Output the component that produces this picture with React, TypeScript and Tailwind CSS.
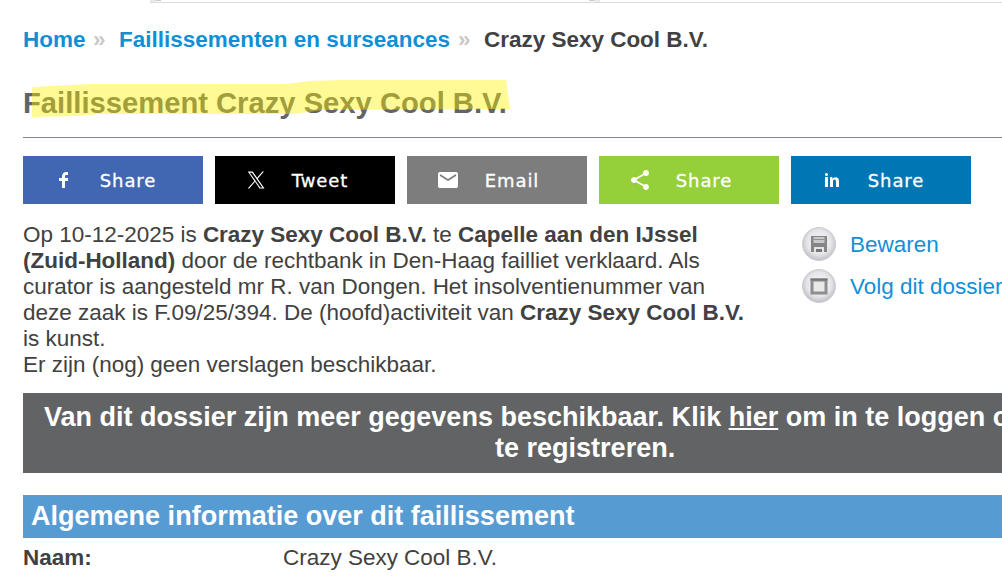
import type { ReactNode } from "react";

const shareButtons = [
  {
    name: "facebook",
    label: "Share",
    color: "bg-[#4267b2]",
    path: "m21.7 16.7h5v5h-5v11.6h-5v-11.6h-5v-5h5v-2.1c0-2 0.6-4.5 1.8-5.9 1.3-1.3 2.8-2 4.7-2h3.5v5h-3.5c-0.9 0-1.5 0.6-1.5 1.5v3.5z",
  },
  {
    name: "twitter",
    label: "Tweet",
    color: "bg-black",
    path: "M22.9 17.9L33.3 6h-2.500l-9 10.300L14.600 6H6.300l10.900 15.600L6.300 34h2.500l9.500-10.900L25.900 34h8.300L22.900 17.900zm-3.400 3.800l-1.100-1.600L9.600 7.800h3.800l7.100 10 1.100 1.600 9.200 13h-3.800l-7.500-10.700z",
  },
  {
    name: "email",
    label: "Email",
    color: "bg-[#7d7d7d]",
    path: "m33.4 13.4v-3.4l-13.4 8.4-13.4-8.4v3.4l13.4 8.2z m0-6.8q1.3 0 2.3 1.1t0.9 2.3v20q0 1.3-0.9 2.3t-2.3 1.1h-26.8q-1.3 0-2.3-1.1t-0.9-2.3v-20q0-1.3 0.9-2.3t2.3-1.1h26.8z",
  },
  {
    name: "sharethis",
    label: "Share",
    color: "bg-[#95d03a]",
    path: "m30 26.8c2.7 0 4.8 2.2 4.8 4.8s-2.1 5-4.8 5-4.8-2.3-4.8-5c0-0.3 0-0.7 0-1.1l-11.8-6.8c-0.9 0.8-2.1 1.3-3.4 1.3-2.7 0-5-2.3-5-5s2.3-5 5-5c1.3 0 2.5 0.5 3.4 1.3l11.8-6.8c-0.1-0.4-0.2-0.8-0.2-1.1 0-2.8 2.3-5 5-5s5 2.2 5 5-2.3 5-5 5c-1.3 0-2.5-0.6-3.4-1.4l-11.8 6.8c0.1 0.4 0.2 0.8 0.2 1.2s-0.1 0.8-0.2 1.2l11.9 6.8c0.9-0.7 2.1-1.2 3.3-1.2z",
  },
  {
    name: "linkedin",
    label: "Share",
    color: "bg-[#0077b5]",
    path: "m13.3 31.7h-5v-16.7h5v16.7z m18.4 0h-5v-8.9c0-2.4-0.9-3.5-2.5-3.5-1.3 0-2.1 0.6-2.5 1.9v10.5h-5s0-15 0-16.7h3.9l0.3 3.3h0.1c1-1.6 2.7-2.8 4.9-2.8 1.7 0 3.1 0.5 4.2 1.7 1 1.2 1.6 2.8 1.6 5.1v9.4z m-18.3-20.9c0 1.4-1.1 2.5-2.6 2.5s-2.5-1.1-2.5-2.5 1.1-2.5 2.5-2.5 2.6 1.2 2.6 2.5z",
  },
];

const RoundIcon = ({ children }: { children: ReactNode }) => (
  <svg width="36" height="36" viewBox="0 0 36 36" className="shrink-0">
    <defs>
      <radialGradient id="knob" cx="0.5" cy="0.45" r="0.56">
        <stop offset="0" stopColor="#f8f8fa" />
        <stop offset="0.65" stopColor="#e6e6ea" />
        <stop offset="1" stopColor="#bcbcc2" />
      </radialGradient>
    </defs>
    <circle cx="18" cy="18" r="16.5" fill="url(#knob)" stroke="#cfcfd3" />
    {children}
  </svg>
);

const App = () => {
  return (
    <div className="h-[576px] w-[1002px] overflow-hidden bg-white font-['Liberation_Sans',Arial,sans-serif] text-[22.47px] text-[#414141]">
      <div className="ml-[150px] flex h-[3px] border-b border-[#d9dcdc]">
        <div className="flex h-[2px] w-[450px]">
          <div className="w-[6px] bg-[#e8eaea]" />
          <div className="h-px w-[5px] bg-[#c4c8c8]" />
          <div className="grow" />
          <div className="h-px w-[5px] bg-[#c4c8c8]" />
          <div className="w-[6px] bg-[#e8eaea]" />
        </div>
      </div>
      <div className="ml-[23px] w-[1010px]">
        <nav className="flex h-[26px] mt-[24px] items-center font-bold leading-[26px] whitespace-nowrap">
          <a className="w-[70px] text-[#118fd6]">Home</a>
          <span className="w-[26px] text-[#c8c8c8]">»</span>
          <a className="w-[339px] text-[#118fd6]">Faillissementen en surseances</a>
          <span className="w-[26px] text-[#c8c8c8]">»</span>
          <span>Crazy Sexy Cool B.V.</span>
        </nav>
        <div className="relative mt-[27px] h-[58px] border-b border-[#4d9fa3]">
          <h1 className="pt-[6px] text-[29.2px] leading-[34px] font-bold whitespace-nowrap text-[#626366]">
            Faillissement Crazy Sexy Cool B.V.
          </h1>
          {/* marker stroke over the title */}
          <svg width="490" height="40" viewBox="0 0 490 40" className="absolute top-0 left-0">
            <path
              d="M9 7L65 4H263L287 1L320 0H483L487 29L300 30L270 34L75 34L55 36L9 37Z"
              fill="#fff200"
              fillOpacity="0.41"
            />
          </svg>
        </div>
        <div className="mt-[18px] flex gap-3">
          {shareButtons.map((button) => (
            <a key={button.name} className={`flex h-12 w-[180px] items-center pl-[29px] text-white ${button.color}`}>
              <svg width="24" height="24" viewBox="0 0 40 40" fill="currentColor">
                <path d={button.path} />
              </svg>
              <span className="ml-[22px] w-[60px] text-center font-['DejaVu_Sans',sans-serif] text-[18px] tracking-[0.9px] [-webkit-text-stroke:0.3px_white]">
                {button.label}
              </span>
            </a>
          ))}
        </div>
        <div className="mt-[17px] flex">
          <div className="w-[778px] pt-px leading-[26px] whitespace-nowrap">
            <p>
              Op 10-12-2025 is <b>Crazy Sexy Cool B.V.</b> te <b>Capelle aan den IJssel</b>
              <br />
              <b>(Zuid-Holland)</b> door de rechtbank in Den-Haag failliet verklaard. Als
              <br />
              curator is aangesteld mr R. van Dongen. Het insolventienummer van
              <br />
              deze zaak is F.09/25/394. De (hoofd)activiteit van <b>Crazy Sexy Cool B.V.</b>
              <br />
              is kunst.
            </p>
            <p>Er zijn (nog) geen verslagen beschikbaar.</p>
          </div>
          <div className="mt-[5px] text-[#118fd6] whitespace-nowrap">
            <a className="flex h-[42px] items-start gap-[13px] leading-[37px]">
              <RoundIcon>
                <path d="M10 10H26V26H10Z" fill="#858585" />
                <path d="M12.5 11H23.5V17H12.5Z" fill="#c9c9c9" />
                <path d="M12.5 13.5H23.5" stroke="#929292" />
                <path d="M13 21H23V26H13Z" fill="#e4e4e4" />
                <path d="M15 23H21V26H15Z" fill="#777777" />
              </RoundIcon>
              Bewaren
            </a>
            <a className="flex h-[42px] items-start gap-[13px] leading-[37px]">
              <RoundIcon>
                <rect x="11" y="12" width="14" height="13" fill="#e9e9e9" stroke="#8e8e8e" strokeWidth="3" />
                <path d="M9.5 11.5H26.5" stroke="#777777" strokeWidth="2" />
              </RoundIcon>
              Volg dit dossier
            </a>
          </div>
        </div>
        <div className="mt-[15px] h-20 w-[1124px] bg-[#626365] pt-[9px] pl-[21px] text-[27.03px] leading-[31px] font-bold whitespace-nowrap text-white">
          <p>
            Van dit dossier zijn meer gegevens beschikbaar. Klik <a className="underline">hier</a> om in te loggen of
          </p>
          <p className="pl-[451px]">te registreren.</p>
        </div>
        <h2 className="mt-[22px] h-[43px] bg-[#579bd3] pl-2 text-[27.03px] leading-[42px] font-bold text-white">
          Algemene informatie over dit faillissement
        </h2>
        <div className="mt-[7px] flex leading-[26px]">
          <b className="w-[260px]">Naam:</b>
          <span>Crazy Sexy Cool B.V.</span>
        </div>
      </div>
    </div>
  );
};

export default App;
